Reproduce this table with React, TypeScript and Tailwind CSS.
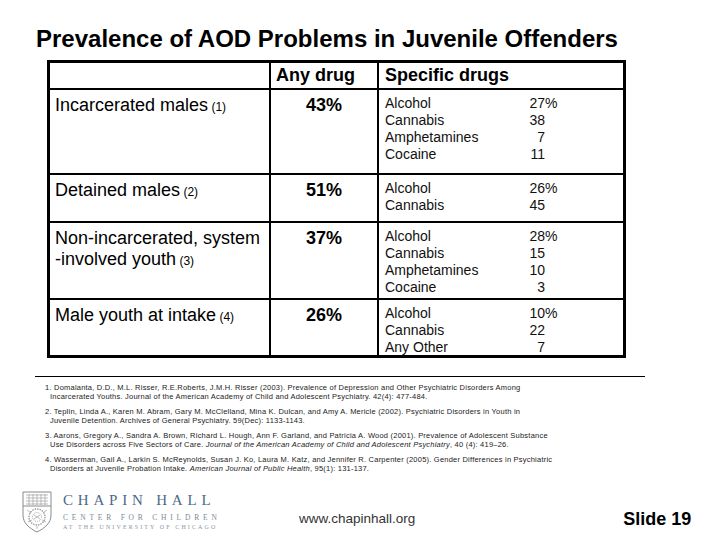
import type { ReactNode } from 'react';

type Drug = [string, string, string?];

type Row = {
  label: string[];
  note: string;
  pct: string;
  height: string;
  drugs: Drug[];
};

const rows: Row[] = [
  {
    label: ['Incarcerated males'],
    note: '(1)',
    pct: '43%',
    height: 'h-[85px]',
    drugs: [
      ['Alcohol', '27', '%'],
      ['Cannabis', '38'],
      ['Amphetamines', '7'],
      ['Cocaine', '11'],
    ],
  },
  {
    label: ['Detained males'],
    note: '(2)',
    pct: '51%',
    height: 'h-[48px]',
    drugs: [
      ['Alcohol', '26', '%'],
      ['Cannabis', '45'],
    ],
  },
  {
    label: ['Non-incarcerated, system', '-involved youth'],
    note: '(3)',
    pct: '37%',
    height: 'h-[77px]',
    drugs: [
      ['Alcohol', '28', '%'],
      ['Cannabis', '15'],
      ['Amphetamines', '10'],
      ['Cocaine', '3'],
    ],
  },
  {
    label: ['Male youth at intake'],
    note: '(4)',
    pct: '26%',
    height: 'h-[57px]',
    drugs: [
      ['Alcohol', '10', '%'],
      ['Cannabis', '22'],
      ['Any Other', '7'],
    ],
  },
];

const footnotes: { first: ReactNode; second: ReactNode }[] = [
  {
    first:
      '1. Domalanta, D.D., M.L. Risser, R.E.Roberts, J.M.H. Risser (2003). Prevalence of Depression and Other Psychiatric Disorders Among',
    second:
      'Incarcerated Youths. Journal of the American Academy of Child and Adolescent Psychiatry. 42(4): 477-484.',
  },
  {
    first:
      '2. Teplin, Linda A., Karen M. Abram, Gary M. McClelland, Mina K. Dulcan, and Amy A. Mericle (2002). Psychiatric Disorders in Youth in',
    second: 'Juvenile Detention. Archives of General Psychiatry. 59(Dec): 1133-1143.',
  },
  {
    first:
      '3. Aarons, Gregory A., Sandra A. Brown, Richard L. Hough, Ann F. Garland, and Patricia A. Wood (2001). Prevalence of Adolescent Substance',
    second: (
      <>
        Use Disorders across Five Sectors of Care.{' '}
        <i>Journal of the American Academy of Child and Adolescent Psychiatry</i>, 40 (4): 419–26.
      </>
    ),
  },
  {
    first:
      '4. Wasserman, Gail A., Larkin S. McReynolds, Susan J. Ko, Laura M. Katz, and Jennifer R. Carpenter (2005). Gender Differences in Psychiatric',
    second: (
      <>
        Disorders at Juvenile Probation Intake. <i>American Journal of Public Health</i>, 95(1): 131-137.
      </>
    ),
  },
];

function Shield() {
  return (
    <svg width="30" height="42" viewBox="0 0 30 42" className="shrink-0">
      <path
        d="M1 1 H29 V24 C29 32 23 37 15 41 C7 37 1 32 1 24 Z"
        fill="#fff"
        stroke="#8a8a8a"
        strokeWidth="1"
      />
      {/* top band with the gothic window grid */}
      <path d="M1 15 H29" stroke="#8a8a8a" strokeWidth="1" />
      <path
        d="M4 4 H26 M4 7 H26 M4 10 H26 M4 13 H26 M7 3 V14 M11 3 V14 M15 3 V14 M19 3 V14 M23 3 V14"
        stroke="#a0a0a0"
        strokeWidth="0.7"
      />
      {/* lower emblem */}
      <circle cx="15" cy="26" r="8" fill="none" stroke="#9a9a9a" strokeWidth="1.4" strokeDasharray="1.5 1" />
      <circle cx="15" cy="26" r="4.5" fill="none" stroke="#a8a8a8" strokeWidth="1" strokeDasharray="1 1" />
      <path
        d="M5 19 L9 22 M25 19 L21 22 M6 31 L10 29 M24 31 L20 29 M15 35 V38 M12 24 L18 28 M18 24 L12 28"
        stroke="#a8a8a8"
        strokeWidth="0.8"
      />
    </svg>
  );
}

export default function App() {
  return (
    <div className="w-[720px] h-[540px] bg-white text-black flex flex-col font-['Liberation_Sans',Arial,sans-serif]">
      <h1 className="pl-[36px] pt-[25px] text-[24px] leading-[28px] font-bold whitespace-nowrap">
        Prevalence of AOD Problems in Juvenile Offenders
      </h1>

      {/* table */}
      <div className="ml-[47px] mt-[7px] w-[579px] border-[3px] border-black">
        <div className="flex h-[25px] text-[18px] font-bold leading-[21px]">
          <div className="w-[219px]" />
          <div className="w-[108px] border-l-2 border-black pl-[5px] flex items-center">Any drug</div>
          <div className="flex-1 border-l-2 border-black pl-[6px] flex items-center">Specific drugs</div>
        </div>
        {rows.map((row) => (
          <div key={row.pct} className={`flex border-t-2 border-black ${row.height}`}>
            <div className="w-[219px] pl-[5px] pt-[5px] text-[18px] leading-[21px]">
              {row.label.map((line, i) => (
                <div key={line} className="whitespace-nowrap">
                  {line}
                  {i === row.label.length - 1 && <span className="text-[12px] font-normal"> {row.note}</span>}
                </div>
              ))}
            </div>
            <div className="w-[108px] border-l-2 border-black pt-[5px] text-center text-[18px] leading-[21px] font-bold">
              {row.pct}
            </div>
            <div className="flex-1 border-l-2 border-black pl-[6px] pt-[5px] text-[14px] leading-[17px] text-[#111]">
              {row.drugs.map(([name, num, pct]) => (
                <div key={name} className="flex">
                  <span className="w-[144px]">{name}</span>
                  <span className="w-[16px] text-right">{num}</span>
                  {pct && <span>{pct}</span>}
                </div>
              ))}
            </div>
          </div>
        ))}
      </div>

      {/* references */}
      <div className="ml-[35px] mt-[18px] w-[610px] h-px bg-black" />
      <div className="ml-[45px] mt-[6px] flex flex-col gap-[6px] text-[7.5px] leading-[9px] tracking-[0.22px] text-[#222]">
        {footnotes.map((fn, i) => (
          <div key={i}>
            <div className="whitespace-nowrap">{fn.first}</div>
            <div className="whitespace-nowrap pl-[5px]">{fn.second}</div>
          </div>
        ))}
      </div>

      {/* footer */}
      <div className="mt-auto mb-[7px] h-[42px] flex items-start pl-[22px]">
        <Shield />
        <div className="ml-[11px] w-[160px] font-['Liberation_Serif',serif]">
          <div className="mt-[2px] text-[15px] leading-[15px] tracking-[4.8px] text-[#4b6a89] whitespace-nowrap">
            CHAPIN HALL
          </div>
          <div className="mt-[6px] text-[7.5px] leading-[8px] tracking-[3.8px] text-[#7d8a96] whitespace-nowrap">
            CENTER FOR CHILDREN
          </div>
          <div className="mt-[2px] text-[6px] leading-[6px] tracking-[2.1px] text-[#8a96a2] whitespace-nowrap">
            AT THE UNIVERSITY OF CHICAGO
          </div>
        </div>
        <div className="ml-[76px] mt-[20px] text-[13.5px] leading-[16px] text-[#333]">www.chapinhall.org</div>
        <div className="ml-[208px] mt-[18px] text-[18px] leading-[20px] font-bold">Slide 19</div>
      </div>
    </div>
  );
}
